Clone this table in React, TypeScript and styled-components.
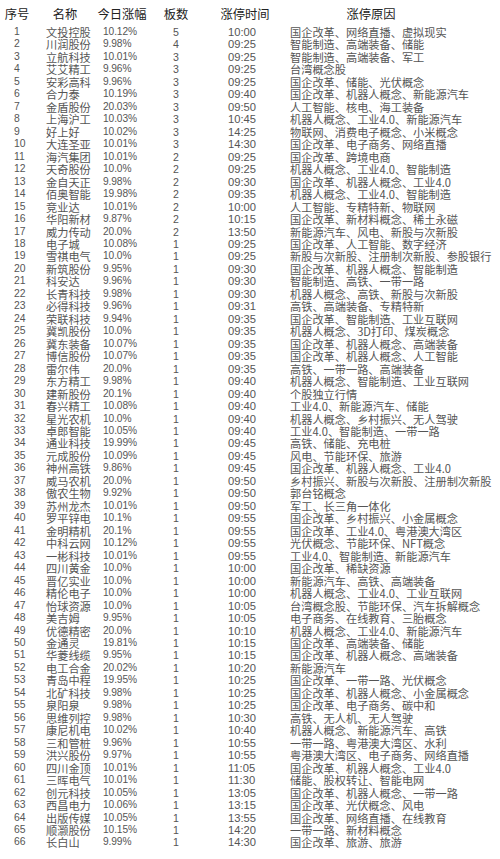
import React from "react";
import styled, { createGlobalStyle } from "styled-components";

const Global = createGlobalStyle`
  html, body { margin: 0; padding: 0; background: #ffffff; }
  body { font-family: "Liberation Sans", "Noto Sans CJK SC", sans-serif; }
`;

type Stock = [number, string, string, number, string, string];

const rows: Stock[] = [
  [1, "文投控股", "10.12%", 5, "10:00", "国企改革、网络直播、虚拟现实"],
  [2, "川润股份", "9.98%", 4, "09:25", "智能制造、高端装备、储能"],
  [3, "立航科技", "10.01%", 3, "09:25", "智能制造、高端装备、军工"],
  [4, "艾艾精工", "9.96%", 3, "09:25", "台湾概念股"],
  [5, "安彩高科", "9.96%", 3, "09:25", "国企改革、储能、光伏概念"],
  [6, "合力泰", "10.19%", 3, "09:40", "国企改革、机器人概念、新能源汽车"],
  [7, "金盾股份", "20.03%", 3, "09:50", "人工智能、核电、海工装备"],
  [8, "上海沪工", "10.03%", 3, "10:45", "机器人概念、工业4.0、新能源汽车"],
  [9, "好上好", "10.02%", 3, "14:25", "物联网、消费电子概念、小米概念"],
  [10, "大连圣亚", "10.01%", 3, "14:30", "国企改革、电子商务、网络直播"],
  [11, "海汽集团", "10.01%", 2, "09:25", "国企改革、跨境电商"],
  [12, "天奇股份", "10.0%", 2, "09:25", "机器人概念、工业4.0、智能制造"],
  [13, "金自天正", "9.98%", 2, "09:30", "国企改革、机器人概念、工业4.0"],
  [14, "佰奥智能", "19.98%", 2, "09:35", "机器人概念、工业4.0、智能制造"],
  [15, "竞业达", "10.01%", 2, "10:00", "人工智能、专精特新、物联网"],
  [16, "华阳新材", "9.87%", 2, "10:15", "国企改革、新材料概念、稀土永磁"],
  [17, "威力传动", "20.0%", 2, "13:50", "新能源汽车、风电、新股与次新股"],
  [18, "电子城", "10.08%", 1, "09:25", "国企改革、人工智能、数字经济"],
  [19, "雪祺电气", "10.0%", 1, "09:25", "新股与次新股、注册制次新股、参股银行"],
  [20, "新筑股份", "9.95%", 1, "09:30", "国企改革、机器人概念、智能制造"],
  [21, "科安达", "9.96%", 1, "09:30", "智能制造、高铁、一带一路"],
  [22, "长青科技", "9.98%", 1, "09:30", "机器人概念、高铁、新股与次新股"],
  [23, "必得科技", "9.96%", 1, "09:31", "高铁、高端装备、专精特新"],
  [24, "荣联科技", "9.94%", 1, "09:35", "国企改革、智能制造、工业互联网"],
  [25, "冀凯股份", "10.0%", 1, "09:35", "机器人概念、3D打印、煤炭概念"],
  [26, "冀东装备", "10.07%", 1, "09:35", "国企改革、机器人概念、高端装备"],
  [27, "博信股份", "10.07%", 1, "09:35", "国企改革、机器人概念、人工智能"],
  [28, "雷尔伟", "20.0%", 1, "09:35", "高铁、一带一路、高端装备"],
  [29, "东方精工", "9.98%", 1, "09:40", "机器人概念、智能制造、工业互联网"],
  [30, "建新股份", "20.1%", 1, "09:40", "个股独立行情"],
  [31, "春兴精工", "10.08%", 1, "09:40", "工业4.0、新能源汽车、储能"],
  [32, "星光农机", "10.0%", 1, "09:40", "机器人概念、乡村振兴、无人驾驶"],
  [33, "卓郎智能", "10.05%", 1, "09:40", "工业4.0、智能制造、一带一路"],
  [34, "通业科技", "19.99%", 1, "09:45", "高铁、储能、充电桩"],
  [35, "元成股份", "10.09%", 1, "09:45", "风电、节能环保、旅游"],
  [36, "神州高铁", "9.86%", 1, "09:45", "国企改革、机器人概念、工业4.0"],
  [37, "威马农机", "20.0%", 1, "09:50", "乡村振兴、新股与次新股、注册制次新股"],
  [38, "傲农生物", "9.92%", 1, "09:50", "郭台铭概念"],
  [39, "苏州龙杰", "10.01%", 1, "09:50", "军工、长三角一体化"],
  [40, "罗平锌电", "10.1%", 1, "09:55", "国企改革、乡村振兴、小金属概念"],
  [41, "金明精机", "20.1%", 1, "09:55", "国企改革、工业4.0、粤港澳大湾区"],
  [42, "中科云网", "10.12%", 1, "09:55", "光伏概念、节能环保、NFT概念"],
  [43, "一彬科技", "10.01%", 1, "09:55", "工业4.0、智能制造、新能源汽车"],
  [44, "四川黄金", "10.0%", 1, "10:00", "国企改革、稀缺资源"],
  [45, "晋亿实业", "10.0%", 1, "10:00", "新能源汽车、高铁、高端装备"],
  [46, "精伦电子", "10.0%", 1, "10:00", "机器人概念、工业4.0、工业互联网"],
  [47, "怡球资源", "10.0%", 1, "10:05", "台湾概念股、节能环保、汽车拆解概念"],
  [48, "美吉姆", "9.95%", 1, "10:05", "电子商务、在线教育、三胎概念"],
  [49, "优德精密", "20.0%", 1, "10:10", "机器人概念、工业4.0、新能源汽车"],
  [50, "金通灵", "19.81%", 1, "10:15", "国企改革、高端装备、储能"],
  [51, "华菱线缆", "9.95%", 1, "10:15", "国企改革、机器人概念、高端装备"],
  [52, "电工合金", "20.02%", 1, "10:20", "新能源汽车"],
  [53, "青岛中程", "19.95%", 1, "10:25", "国企改革、一带一路、光伏概念"],
  [54, "北矿科技", "9.98%", 1, "10:25", "国企改革、机器人概念、小金属概念"],
  [55, "泉阳泉", "9.98%", 1, "10:25", "国企改革、电子商务、碳中和"],
  [56, "思维列控", "9.98%", 1, "10:30", "高铁、无人机、无人驾驶"],
  [57, "康尼机电", "10.02%", 1, "10:40", "机器人概念、新能源汽车、高铁"],
  [58, "三和管桩", "9.96%", 1, "10:55", "一带一路、粤港澳大湾区、水利"],
  [59, "洪兴股份", "9.97%", 1, "10:55", "粤港澳大湾区、电子商务、网络直播"],
  [60, "四川金顶", "10.01%", 1, "11:05", "国企改革、机器人概念、工业4.0"],
  [61, "三晖电气", "10.01%", 1, "11:30", "储能、股权转让、智能电网"],
  [62, "创元科技", "10.05%", 1, "13:05", "国企改革、机器人概念、一带一路"],
  [63, "西昌电力", "10.06%", 1, "13:15", "国企改革、光伏概念、风电"],
  [64, "出版传媒", "10.05%", 1, "13:55", "国企改革、网络直播、在线教育"],
  [65, "顺灏股份", "10.15%", 1, "14:20", "一带一路、新材料概念"],
  [66, "长白山", "9.99%", 1, "14:30", "国企改革、旅游、旅游"],
];

const Table = styled.div`
  width: 500px;
  display: flex;
  flex-direction: column;
  background: #ffffff;
  overflow: hidden;
`;

const cols = "34px 62px 52px 56px 82px 214px";

const HeaderRow = styled.div`
  display: grid;
  grid-template-columns: ${cols};
  height: 26px;
  align-items: center;
`;

const HeadCell = styled.div`
  text-align: center;
  font-family: "Noto Sans CJK SC", sans-serif;
  font-size: 12.3px;
  line-height: 14px;
  color: #222222;
  white-space: nowrap;
  padding-top: 1px;
`;

const ReasonHead = styled(HeadCell)`
  width: 170px;
`;

const Row = styled.div`
  display: grid;
  grid-template-columns: ${cols};
  height: 12.47px;
  align-items: center;
  line-height: 12.47px;
  color: #555555;
  white-space: nowrap;
`;

const IndexCell = styled.div`
  padding-left: 14px;
  font-family: "Liberation Sans", sans-serif;
  font-size: 10.4px;
`;

const NameCell = styled.div`
  padding-left: 12px;
  font-family: "Noto Sans CJK SC", sans-serif;
  font-size: 11.2px;
`;

const PctCell = styled.div`
  padding-left: 7px;
  font-family: "Liberation Sans", sans-serif;
  font-size: 10.2px;
  letter-spacing: -0.1px;
`;

const CountCell = styled.div`
  text-align: center;
  font-family: "Liberation Sans", sans-serif;
  font-size: 10.6px;
`;

const TimeCell = styled.div`
  padding-left: 24px;
  font-family: "Liberation Sans", sans-serif;
  font-size: 11.2px;
`;

const ReasonCell = styled.div`
  padding-left: 4px;
  font-family: "Noto Sans CJK SC", sans-serif;
  font-size: 11.2px;
  overflow: visible;
`;

export default function App() {
  return (
    <>
      <Global />
      <Table>
        <HeaderRow>
          <HeadCell>序号</HeadCell>
          <HeadCell>名称</HeadCell>
          <HeadCell>今日涨幅</HeadCell>
          <HeadCell>板数</HeadCell>
          <HeadCell>涨停时间</HeadCell>
          <ReasonHead>涨停原因</ReasonHead>
        </HeaderRow>
        {rows.map(([i, name, pct, n, time, reason]) => (
          <Row key={i}>
            <IndexCell>{i}</IndexCell>
            <NameCell>{name}</NameCell>
            <PctCell>{pct}</PctCell>
            <CountCell>{n}</CountCell>
            <TimeCell>{time}</TimeCell>
            <ReasonCell>{reason}</ReasonCell>
          </Row>
        ))}
      </Table>
    </>
  );
}
